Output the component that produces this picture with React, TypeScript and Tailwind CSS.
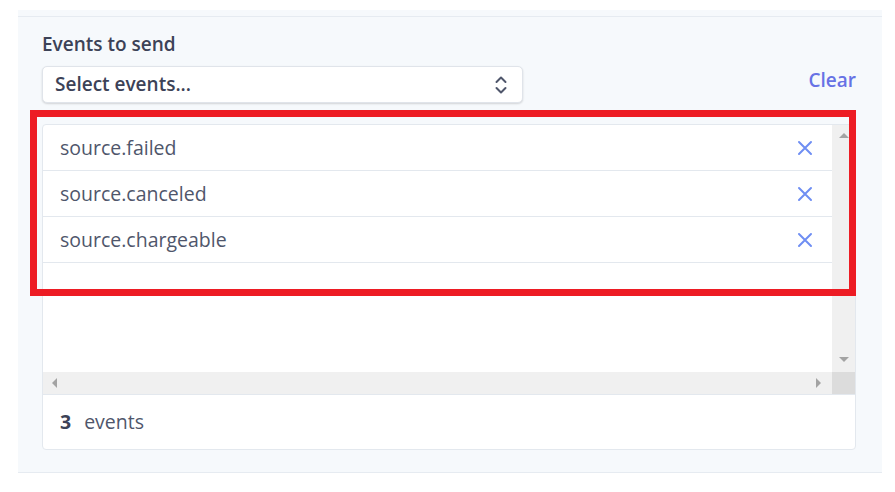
import React from "react";

const font = { fontFamily: '"Open Sans", "Noto Sans", sans-serif' };

function XIcon() {
  return (
    <svg width="16" height="16" viewBox="0 0 16 16" fill="none">
      <path d="M2 2L14 14M14 2L2 14" stroke="#6f8ef3" strokeWidth="2" strokeLinecap="round" />
    </svg>
  );
}

function Chevrons() {
  return (
    <svg width="14" height="20" viewBox="0 0 14 20" fill="none">
      <path d="M2.5 7L7 2.5L11.5 7" stroke="#4f566b" strokeWidth="2" strokeLinecap="round" strokeLinejoin="round" />
      <path d="M2.5 13L7 17.5L11.5 13" stroke="#4f566b" strokeWidth="2" strokeLinecap="round" strokeLinejoin="round" />
    </svg>
  );
}

function Tri({ dir }: { dir: "up" | "down" | "left" | "right" }) {
  const pts = {
    up: "0,6 5,1 10,6",
    down: "0,1 5,6 10,1",
    left: "6,0 1,5 6,10",
    right: "1,0 6,5 1,10",
  }[dir];
  const w = dir === "up" || dir === "down" ? 10 : 7;
  const h = dir === "up" || dir === "down" ? 7 : 10;
  return (
    <svg width={w} height={h} viewBox={`0 0 ${w} ${h}`}>
      <polygon points={pts} fill="#a3a3a3" />
    </svg>
  );
}

const events = ["source.failed", "source.canceled", "source.chargeable"];

export default function App() {
  return (
    <div className="relative w-[895px] h-[492px] bg-white pt-[10px] pl-[18px]" style={font}>
      <div className="w-[864px] h-[463px] bg-[#f6f9fc] flex flex-col">
        <div className="h-[6px]" />
        <div className="flex-1 border-t border-b border-[#e6ebf1] px-[24px] pt-[14px]">
          <div className="text-[19px] leading-[26px] font-semibold text-[#3c4257]">Events to send</div>
          <div className="mt-[9px] flex items-center justify-between w-[814px]">
            <div className="w-[481px] h-[37px] bg-white rounded-[5px] border border-[#e0e4ea] shadow-[0_1px_2px_rgba(0,0,0,0.15)] flex items-center justify-between pl-[12px] pr-[14px]">
              <span className="text-[19px] font-semibold text-[#3c4257]">Select events...</span>
              <Chevrons />
            </div>
            <span className="text-[19px] font-semibold text-[#6772e5] mt-[-8px]">Clear</span>
          </div>
          <div className="mt-[21px] w-[814px] h-[326px] bg-white rounded-[4px] border border-[#e3e8ee] flex flex-col overflow-hidden">
            <div className="flex h-[247px]">
              <div className="flex-1 flex flex-col">
                {events.map((e) => (
                  <div key={e} className="h-[46px] border-b border-[#e3e8ee] flex items-center justify-between pl-[17px] pr-[19px]">
                    <span className="text-[19.5px] text-[#4f566b]">{e}</span>
                    <XIcon />
                  </div>
                ))}
              </div>
              <div className="w-[23px] bg-[#f0f0f0] flex flex-col items-center justify-between pt-[7px] pb-[9px]">
                <Tri dir="up" />
                <Tri dir="down" />
              </div>
            </div>
            <div className="flex h-[22px]">
              <div className="flex-1 bg-[#f0f0f0] flex items-center justify-between pl-[8px] pr-[10px]">
                <Tri dir="left" />
                <Tri dir="right" />
              </div>
              <div className="w-[23px] bg-[#dcdcdc]" />
            </div>
            <div className="flex-1 border-t border-[#e3e8ee] flex items-center pl-[17px] text-[19.5px]">
              <span className="font-bold text-[#3c4257]">3</span>
              <span className="ml-[13px] text-[#4f566b]">events</span>
            </div>
          </div>
        </div>
      </div>
      <div className="absolute left-[30px] top-[110px] w-[826px] h-[186px] border-[7px] border-[#ed1c24]" />
    </div>
  );
}
